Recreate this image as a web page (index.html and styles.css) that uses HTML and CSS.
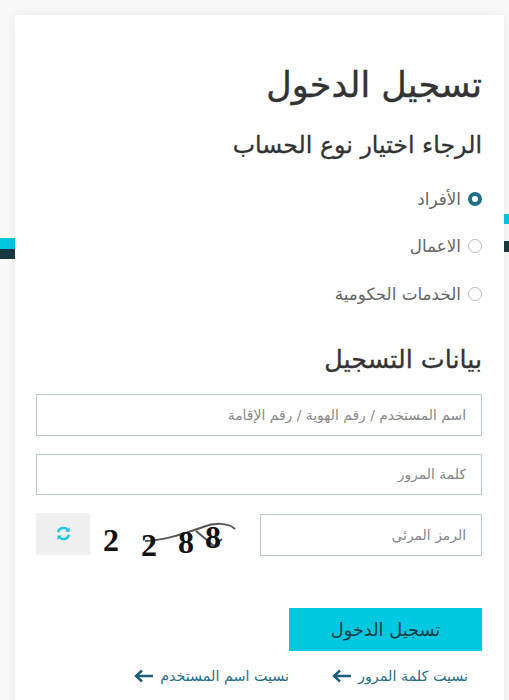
FILE: index.html
```html
<!DOCTYPE html>
<html lang="ar" dir="rtl">
<head>
<meta charset="utf-8">
<title>تسجيل الدخول</title>
<link rel="stylesheet" href="styles.css">
</head>
<body>
<div class="stripe stripe-left"></div>
<div class="stripe stripe-right-a"></div>
<div class="stripe stripe-right-b"></div>
<form class="card">
  <h1>تسجيل الدخول</h1>
  <h2>الرجاء اختيار نوع الحساب</h2>
  <div class="radios">
    <label class="radio"><span class="dot on"></span>الأفراد</label>
    <label class="radio"><span class="dot"></span>الاعمال</label>
    <label class="radio"><span class="dot"></span>الخدمات الحكومية</label>
  </div>
  <h2 class="sub">بيانات التسجيل</h2>
  <input class="field" type="text" placeholder="اسم المستخدم / رقم الهوية / رقم الإقامة">
  <input class="field field-pass" type="text" placeholder="كلمة المرور">
  <div class="captcha">
    <input class="field code" type="text" placeholder="الرمز المرئي">
    <svg class="captcha-img" viewBox="0 0 140 44" width="140" height="44">
      <path d="M47 28C70 27 90 19 105 14C115 10 130 9 137 16M98 18L116 33L124 26" fill="none" stroke="#555" stroke-width="2"/>
      <text x="5" y="38" class="digit">2</text>
      <text x="43" y="43" class="digit">2</text>
      <text x="80" y="40" class="digit">8</text>
      <text x="107" y="35" class="digit">8</text>
    </svg>
    <button class="refresh" type="button" aria-label="refresh">
      <svg viewBox="0 0 16 16" width="15" height="15" fill="none" stroke="#1cc4e6" stroke-width="2.6">
        <path d="M2.2 6.5A6 6 0 0 1 12.6 4.2"/>
        <path d="M13.8 9.5A6 6 0 0 1 3.4 11.8"/>
        <path d="M14.5 1.2V6H9.8z" fill="#1cc4e6" stroke="none"/>
        <path d="M1.5 14.8V10H6.2z" fill="#1cc4e6" stroke="none"/>
      </svg>
    </button>
  </div>
  <button class="submit" type="button">تسجيل الدخول</button>
  <div class="links">
    <a href="#">نسيت كلمة المرور
      <svg viewBox="0 0 20 14" width="20" height="14" fill="none" stroke="#1b5f78" stroke-width="2.4"><path d="M19 7H2M8 1.5L2 7L8 12.5"/></svg>
    </a>
    <a href="#">نسيت اسم المستخدم
      <svg viewBox="0 0 20 14" width="20" height="14" fill="none" stroke="#1b5f78" stroke-width="2.4"><path d="M19 7H2M8 1.5L2 7L8 12.5"/></svg>
    </a>
  </div>
</form>
</body>
</html>
```
FILE: styles.css
```css
html{font-family:"DejaVu Sans","Noto Sans",sans-serif}
body{margin:0;background:#f8f8f8;height:700px;overflow:hidden;position:relative}
.stripe{position:absolute}
.stripe-left{left:0;top:238px;width:15px;height:21px;background:linear-gradient(#00c8e0 50%,#17393f 50%)}
.stripe-right-a{right:0;top:214px;width:5px;height:10px;background:#00c8e0}
.stripe-right-b{right:0;top:241px;width:5px;height:11px;background:#17393f}
.card{position:relative;box-sizing:border-box;width:489px;height:720px;margin:15px 5px 0 15px;padding:49px 22px 0 21px;background:#fff;border-radius:3px;box-shadow:0 0 12px rgba(0,0,0,.06)}
h1{margin:0;font-size:35px;line-height:42px;font-weight:500;color:#333;-webkit-text-stroke:.4px #333}
h2{margin:24px 0 0;font-size:23.7px;line-height:30px;font-weight:500;color:#333;-webkit-text-stroke:.3px #333}
.radios{margin-top:15px}
.radio{display:flex;align-items:center;gap:7px;height:47.5px;font-size:16.8px;color:#666}
.dot{box-sizing:border-box;width:14px;height:14px;border:1px solid #bbb;border-radius:50%;background:#fff}
.dot.on{border:4px solid #1f6f8b}
h2.sub{margin-top:26px;font-size:25.4px}
.field{display:block;box-sizing:border-box;width:100%;height:42px;margin-top:20px;padding:0 15px;border:1px solid #b9c9cc;font-family:inherit;font-size:13.9px;background:#fff}
.field::placeholder{color:#888;opacity:1}
.field-pass{height:41px;margin-top:18px}
.captcha{display:flex;align-items:center;margin-top:18px}
.code{width:222px;margin:0}
.captcha-img{margin:0 22px 0 0;flex:none;direction:ltr;overflow:visible}
.digit{font-family:"Liberation Serif",serif;font-weight:700;font-size:32px;fill:#111}
.refresh{display:flex;align-items:center;justify-content:center;width:54px;height:42px;margin:0 auto 2px 0;padding:0;border:0;background:#f0f0f0}
.submit{display:block;width:193px;height:43px;margin-top:51px;border:0;background:#00c8e0;font-family:inherit;font-size:17.8px;color:#17393f}
.links{display:flex;gap:43px;margin-top:16px;padding-right:14px}
.links a{display:flex;align-items:center;gap:6px;font-size:14.3px;line-height:18px;color:#1f6f8b;text-decoration:none}
```
